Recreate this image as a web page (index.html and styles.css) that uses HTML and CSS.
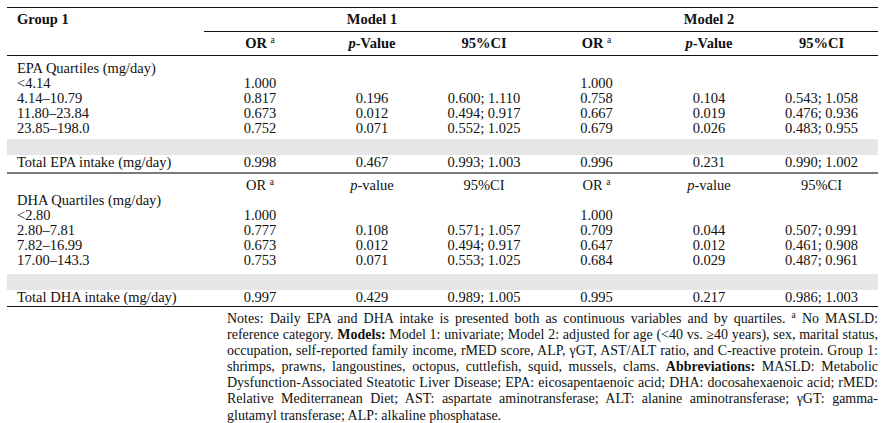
FILE: index.html
```html
<!DOCTYPE html>
<html lang="en">
<head>
<meta charset="utf-8">
<title>Table</title>
<link rel="stylesheet" href="styles.css">
</head>
<body>
<div class="page">
  <table class="tbl">
    <colgroup>
      <col class="c-label"><col class="c-m"><col class="c-m"><col class="c-m"><col class="c-m2"><col class="c-m"><col class="c-m2">
    </colgroup>
    <thead>
      <tr class="h1">
        <th class="lbl">Group 1</th>
        <th colspan="3" class="grp">Model 1</th>
        <th colspan="3" class="grp">Model 2</th>
      </tr>
      <tr class="h2">
        <th class="lbl"></th>
        <th>OR <sup class="sup">a</sup></th>
        <th><i>p</i>-Value</th>
        <th>95%CI</th>
        <th>OR <sup class="sup">a</sup></th>
        <th><i>p</i>-Value</th>
        <th>95%CI</th>
      </tr>
    </thead>
    <tbody>
      <tr class="first"><td class="lbl">EPA Quartiles (mg/day)</td><td></td><td></td><td></td><td></td><td></td><td></td></tr>
      <tr><td class="lbl">&lt;4.14</td><td>1.000</td><td></td><td></td><td>1.000</td><td></td><td></td></tr>
      <tr><td class="lbl">4.14–10.79</td><td>0.817</td><td>0.196</td><td>0.600; 1.110</td><td>0.758</td><td>0.104</td><td>0.543; 1.058</td></tr>
      <tr><td class="lbl">11.80–23.84</td><td>0.673</td><td>0.012</td><td>0.494; 0.917</td><td>0.667</td><td>0.019</td><td>0.476; 0.936</td></tr>
      <tr><td class="lbl">23.85–198.0</td><td>0.752</td><td>0.071</td><td>0.552; 1.025</td><td>0.679</td><td>0.026</td><td>0.483; 0.955</td></tr>
      <tr class="band band-a"><td colspan="7"></td></tr>
      <tr class="total total-a"><td class="lbl">Total EPA intake (mg/day)</td><td>0.998</td><td>0.467</td><td>0.993; 1.003</td><td>0.996</td><td>0.231</td><td>0.990; 1.002</td></tr>
      <tr class="subhead"><td class="lbl"></td><td>OR <sup class="sup">a</sup></td><td><i>p</i>-value</td><td>95%CI</td><td>OR <sup class="sup">a</sup></td><td><i>p</i>-value</td><td>95%CI</td></tr>
      <tr><td class="lbl">DHA Quartiles (mg/day)</td><td></td><td></td><td></td><td></td><td></td><td></td></tr>
      <tr><td class="lbl">&lt;2.80</td><td>1.000</td><td></td><td></td><td>1.000</td><td></td><td></td></tr>
      <tr><td class="lbl">2.80–7.81</td><td>0.777</td><td>0.108</td><td>0.571; 1.057</td><td>0.709</td><td>0.044</td><td>0.507; 0.991</td></tr>
      <tr><td class="lbl">7.82–16.99</td><td>0.673</td><td>0.012</td><td>0.494; 0.917</td><td>0.647</td><td>0.012</td><td>0.461; 0.908</td></tr>
      <tr><td class="lbl">17.00–143.3</td><td>0.753</td><td>0.071</td><td>0.553; 1.025</td><td>0.684</td><td>0.029</td><td>0.487; 0.961</td></tr>
      <tr class="band band-b"><td colspan="7"></td></tr>
      <tr class="total total-b"><td class="lbl">Total DHA intake (mg/day)</td><td>0.997</td><td>0.429</td><td>0.989; 1.005</td><td>0.995</td><td>0.217</td><td>0.986; 1.003</td></tr>
    </tbody>
  </table>
  <div class="notes">
    <p class="ln">Notes: Daily EPA and DHA intake is presented both as continuous variables and by quartiles. <sup class="nsup">a</sup> No MASLD:</p>
    <p class="ln">reference category. <b>Models:</b> Model 1: univariate; Model 2: adjusted for age (&lt;40 vs. ≥40 years), sex, marital status,</p>
    <p class="ln">occupation, self-reported family income, rMED score, ALP, γGT, AST/ALT ratio, and C-reactive protein. Group 1:</p>
    <p class="ln">shrimps, prawns, langoustines, octopus, cuttlefish, squid, mussels, clams. <b>Abbreviations:</b> MASLD: Metabolic</p>
    <p class="ln">Dysfunction-Associated Steatotic Liver Disease; EPA: eicosapentaenoic acid; DHA: docosahexaenoic acid; rMED:</p>
    <p class="ln">Relative Mediterranean Diet; AST: aspartate aminotransferase; ALT: alanine aminotransferase; γGT: gamma-</p>
    <p class="ln last">glutamyl transferase; ALP: alkaline phosphatase.</p>
  </div>
</div>
</body>
</html>
```
FILE: styles.css
```css
html, body {
  margin: 0;
  padding: 0;
  background: #ffffff;
}
body {
  font-family: "Liberation Serif", "Times New Roman", serif;
  font-size: 14px;
  color: #111111;
}
.page {
  width: 871px;
  padding: 7px 0 0 7px;
}
.tbl {
  width: 871px;
  border-collapse: separate;
  border-spacing: 0;
  table-layout: fixed;
  border-top: 1px solid #111;
  font-size: 14.5px;
}
.c-label { width: 197px; }
.c-m { width: 112px; }
.c-m2 { width: 113px; }
.tbl th, .tbl td {
  padding: 0;
  line-height: 15px;
  height: 15px;
  text-align: center;
  white-space: nowrap;
  vertical-align: top;
}
.tbl th { font-weight: bold; }
.tbl .lbl { text-align: left; padding-left: 10px; }
.h1 th { padding-top: 4px; padding-bottom: 5px; }
.h1 th.grp { border-bottom: 1px solid #111; padding-bottom: 4px; }
.h2 th { padding-top: 4px; padding-bottom: 4px; border-bottom: 1px solid #111; }
.sup {
  font-size: 9.5px;
  font-weight: normal;
  line-height: 0;
  vertical-align: 5px;
}
tr.first td { padding-top: 5px; }
tr.band td {
  height: 16px;
  padding: 0;
  background: #e6e6e6;
  background-clip: content-box;
}
tr.band-a td { padding-top: 3px; }
tr.band-b td { padding-top: 6px; }
tr.total-a td { padding-bottom: 2px; border-bottom: 2px solid #7a7a7a; }
tr.total-b td { padding-bottom: 1px; border-bottom: 1px solid #111; }
tr.subhead td { padding-top: 4px; }
.notes {
  width: 651px;
  margin: 4px 0 0 220px;
  font-size: 14px;
  line-height: 16.1px;
}
.ln {
  margin: 0;
  white-space: nowrap;
  text-align: justify;
  text-align-last: justify;
  word-spacing: -0.5px;
}
.ln.last { text-align-last: left; word-spacing: 0; }
.nsup {
  font-size: 9.5px;
  line-height: 0;
  vertical-align: 5px;
}
```
